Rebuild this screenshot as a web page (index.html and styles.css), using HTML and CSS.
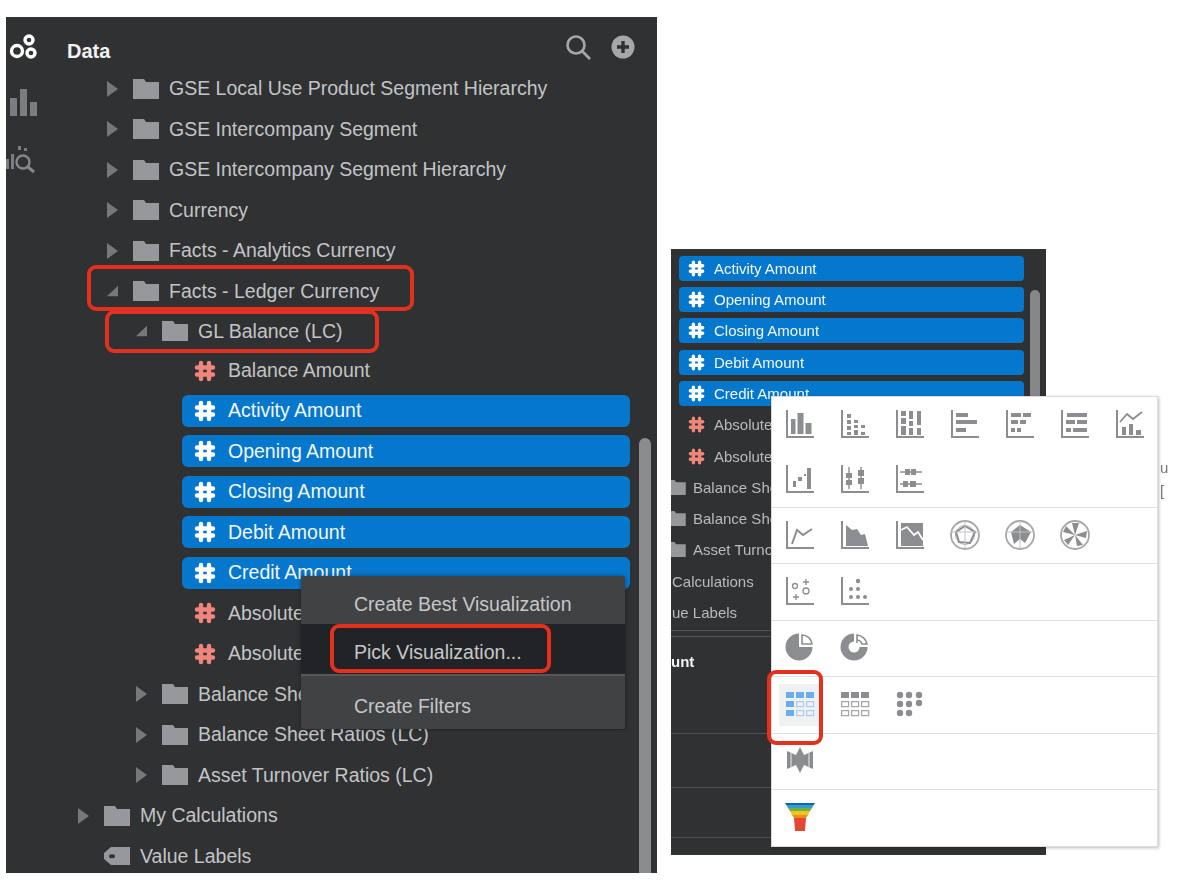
FILE: index.html
```html
<!DOCTYPE html>
<html lang="en">
<head>
    <meta charset="UTF-8">
    <title>Pick Visualization</title>
    <link rel="stylesheet" href="styles.css">
</head>
<body>

<!-- shared icons -->
<svg class="defs" aria-hidden="true">
    <symbol id="arrow" viewBox="0 0 12 16"><path d="M1 0L12 8L1 16Z"/></symbol>
    <symbol id="arrow-open" viewBox="0 0 14 14"><path d="M14 1V13H1Z"/></symbol>
    <symbol id="folder" viewBox="0 0 26 20"><path d="M0 0H11L13 3H26V20H0Z"/></symbol>
    <symbol id="tag" viewBox="0 0 26 20"><path fill-rule="evenodd" d="M7 1H26V19H7L0 13V7ZM8 8.5a2 2 0 1 0 0 3.5a2 2 0 1 0 0-3.5Z"/></symbol>
    <symbol id="hash" viewBox="0 0 22 22"><path d="M7 3V19M15 3V19M3 7.5H19M3 14.5H19" fill="none" stroke="currentColor" stroke-width="4.4" stroke-linecap="round"/></symbol>
    <symbol id="axis" viewBox="0 0 30 30"><path d="M2 1V28H29" fill="none" stroke="#8b8d90" stroke-width="2"/></symbol>
</svg>

<main class="page">

    <section class="panel">
        <div class="rail">
            <svg class="rail-icon" viewBox="0 0 30 30" fill="none" stroke="#fff" stroke-width="3.4"><circle cx="8" cy="19" r="5.5"/><circle cx="20" cy="8" r="4"/><circle cx="22" cy="21" r="4"/></svg>
            <svg class="rail-icon dim" viewBox="0 0 30 30" fill="#7b7d80"><rect x="1" y="10" width="7" height="18"/><rect x="11" y="1" width="7" height="27"/><rect x="21" y="14" width="7" height="14"/></svg>
            <svg class="rail-icon dim" viewBox="0 0 34 30" fill="#7b7d80"><rect x="0" y="15" width="3" height="10"/><rect x="5" y="10" width="3" height="15"/><circle cx="17" cy="18" r="6.5" fill="none" stroke="#85878a" stroke-width="2.4"/><rect x="12" y="2" width="3" height="4"/><rect x="18" y="4" width="3" height="3"/><path d="M22 23L28 28" stroke="#85878a" stroke-width="3"/></svg>
        </div>
        <div class="tree">
            <header class="tree-head">
                <h2>Data</h2>
                <svg class="head-icon" viewBox="0 0 26 26" fill="none" stroke="#a5a7a9" stroke-width="2.6"><circle cx="11" cy="11" r="8.5"/><path d="M17 17L25 25"/></svg>
                <svg class="head-icon plus" viewBox="0 0 24 24"><circle cx="12" cy="12" r="11.5" fill="#a5a7a9"/><path d="M12 6V18M6 12H18" stroke="#2f3133" stroke-width="3.4"/></svg>
            </header>
            <div class="row lvl1"><svg class="arrow"><use href="#arrow"/></svg><svg class="folder"><use href="#folder"/></svg><span>GSE Local Use Product Segment Hierarchy</span></div>
            <div class="row lvl1"><svg class="arrow"><use href="#arrow"/></svg><svg class="folder"><use href="#folder"/></svg><span>GSE Intercompany Segment</span></div>
            <div class="row lvl1"><svg class="arrow"><use href="#arrow"/></svg><svg class="folder"><use href="#folder"/></svg><span>GSE Intercompany Segment Hierarchy</span></div>
            <div class="row lvl1"><svg class="arrow"><use href="#arrow"/></svg><svg class="folder"><use href="#folder"/></svg><span>Currency</span></div>
            <div class="row lvl1"><svg class="arrow"><use href="#arrow"/></svg><svg class="folder"><use href="#folder"/></svg><span>Facts - Analytics Currency</span></div>
            <div class="row lvl1"><svg class="arrow"><use href="#arrow-open"/></svg><svg class="folder"><use href="#folder"/></svg><span>Facts - Ledger Currency</span></div>
            <div class="row lvl2 short"><svg class="arrow"><use href="#arrow-open"/></svg><svg class="folder"><use href="#folder"/></svg><span>GL Balance (LC)</span></div>
            <div class="row short"><div class="leaf"><svg class="hash"><use href="#hash"/></svg><span>Balance Amount</span></div></div>
            <div class="row"><div class="leaf selected"><svg class="hash"><use href="#hash"/></svg><span>Activity Amount</span></div></div>
            <div class="row"><div class="leaf selected"><svg class="hash"><use href="#hash"/></svg><span>Opening Amount</span></div></div>
            <div class="row"><div class="leaf selected"><svg class="hash"><use href="#hash"/></svg><span>Closing Amount</span></div></div>
            <div class="row"><div class="leaf selected"><svg class="hash"><use href="#hash"/></svg><span>Debit Amount</span></div></div>
            <div class="row"><div class="leaf selected"><svg class="hash"><use href="#hash"/></svg><span>Credit Amount</span></div></div>
            <div class="row"><div class="leaf"><svg class="hash"><use href="#hash"/></svg><span>Absolute</span></div></div>
            <div class="row"><div class="leaf"><svg class="hash"><use href="#hash"/></svg><span>Absolute</span></div></div>
            <div class="row lvl2"><svg class="arrow"><use href="#arrow"/></svg><svg class="folder"><use href="#folder"/></svg><span>Balance Sheet (LC)</span></div>
            <div class="row lvl2"><svg class="arrow"><use href="#arrow"/></svg><svg class="folder"><use href="#folder"/></svg><span>Balance Sheet Ratios (LC)</span></div>
            <div class="row lvl2"><svg class="arrow"><use href="#arrow"/></svg><svg class="folder"><use href="#folder"/></svg><span>Asset Turnover Ratios (LC)</span></div>
            <div class="row lvl0"><svg class="arrow"><use href="#arrow"/></svg><svg class="folder"><use href="#folder"/></svg><span>My Calculations</span></div>
            <div class="row lvl0"><svg class="arrow"></svg><svg class="folder"><use href="#tag"/></svg><span>Value Labels</span></div>
        </div>
        <div class="scrollbar"></div>

        <div class="context-menu">
            <div class="menu-item">Create Best Visualization</div>
            <div class="menu-item active">Pick Visualization...</div>
            <div class="menu-item">Create Filters</div>
        </div>
    </section>

    <section class="panel-small">
        <div class="small-list">
            <div class="small-row"><div class="chip selected"><svg class="hash"><use href="#hash"/></svg><span>Activity Amount</span></div></div>
            <div class="small-row"><div class="chip selected"><svg class="hash"><use href="#hash"/></svg><span>Opening Amount</span></div></div>
            <div class="small-row"><div class="chip selected"><svg class="hash"><use href="#hash"/></svg><span>Closing Amount</span></div></div>
            <div class="small-row"><div class="chip selected"><svg class="hash"><use href="#hash"/></svg><span>Debit Amount</span></div></div>
            <div class="small-row"><div class="chip selected"><svg class="hash"><use href="#hash"/></svg><span>Credit Amount</span></div></div>
            <div class="small-row"><div class="chip"><svg class="hash"><use href="#hash"/></svg><span>Absolute Amount</span></div></div>
            <div class="small-row"><div class="chip"><svg class="hash"><use href="#hash"/></svg><span>Absolute Amount</span></div></div>
            <div class="small-row"><svg class="folder"><use href="#folder"/></svg><span>Balance Sheet</span></div>
            <div class="small-row"><svg class="folder"><use href="#folder"/></svg><span>Balance Sheet</span></div>
            <div class="small-row"><svg class="folder"><use href="#folder"/></svg><span>Asset Turnover</span></div>
            <div class="small-row plain"><span>Calculations</span></div>
            <div class="small-row plain"><span>ue Labels</span></div>
        </div>
        <div class="pane-gap"></div>
        <div class="pane-a"><b>unt</b></div>
        <div class="pane-b"></div>
        <div class="pane-c"></div>
        <div class="small-scroll"></div>

        <div class="picker">
            <div class="picker-group">
                <svg class="chart" viewBox="0 0 30 30"><use href="#axis"/><path d="M6 10h4.5v15H6zM12.5 4h6v21h-6zM20.5 14h6v11h-6z"/></svg>
                <svg class="chart" viewBox="0 0 30 30"><use href="#axis"/><path d="M7 5h4v4H7zM7 11h4v4H7zM7 17h4v4H7zM7 23h4v3H7zM14 11h4v3h-4zM14 16h4v3h-4zM14 21h4v5h-4zM21 16h4v3h-4zM21 23h4v3h-4z"/></svg>
                <svg class="chart" viewBox="0 0 30 30"><use href="#axis"/><path d="M6 2h5v5H6zM6 9h5v6H6zM6 17h5v9H6zM14 2h4v8h-4zM14 12h4v5h-4zM14 19h4v7h-4zM22 2h4v14h-4zM22 19h4v7h-4z"/></svg>
                <svg class="chart" viewBox="0 0 30 30"><use href="#axis"/><path d="M6 4h12v4H6zM6 11h21v4H6zM6 19h10v4H6z"/></svg>
                <svg class="chart" viewBox="0 0 30 30"><use href="#axis"/><path d="M6 4h10v4H6zM18 4h8v4h-8zM6 11h7v4H6zM15 11h6v4h-6zM6 19h4v4H6zM12 19h4v4h-4z"/></svg>
                <svg class="chart" viewBox="0 0 30 30"><use href="#axis"/><path d="M7 4h20v4H7zM6 11h9v4H6zM17 11h10v4H17zM6 19h5v4H6zM13 19h14v4H13z"/></svg>
                <svg class="chart" viewBox="0 0 30 30"><use href="#axis"/><path d="M7 18h4v8H7zM14 15h4v11h-4zM21 21h5v5h-5z"/><path d="M5 13L12 5L18 10L27 3" fill="none" stroke="#8b8d90" stroke-width="1.8"/></svg>

                <svg class="chart" viewBox="0 0 30 30"><use href="#axis"/><path d="M8 17h3v6H8zM13 13h4v4h-4zM19 10h2v2h-2zM22 4h4v21h-4z"/></svg>
                <svg class="chart" viewBox="0 0 30 30"><use href="#axis"/><path d="M9 3v22M21 3v22" stroke="#8b8d90" stroke-width="1.4"/><path d="M6 9h6v5H6zM6 16h6v5H6zM18 6h6v6h-6zM18 14h6v6h-6z"/></svg>
                <svg class="chart" viewBox="0 0 30 30"><use href="#axis"/><path d="M5 8H27M5 20H27" stroke="#8b8d90" stroke-width="1.4"/><path d="M10 5h5v6h-5zM16 5h5v6h-5zM8 17h5v6H8zM15 17h6v6h-6z"/></svg>
            </div>
            <div class="picker-group">
                <svg class="chart" viewBox="0 0 30 30"><use href="#axis"/><path d="M7 24L12 10L18 15L27 9" fill="none" stroke="#8b8d90" stroke-width="2"/></svg>
                <svg class="chart" viewBox="0 0 30 30"><use href="#axis"/><path d="M6 26V5L12 10L17 9L21 15L25 14L28 26Z"/></svg>
                <svg class="chart" viewBox="0 0 30 30"><use href="#axis"/><path d="M6 3H28V26H6Z"/><path d="M6 10L12 7L19 15L23 12L28 20" fill="none" stroke="#fff" stroke-width="1.8"/></svg>
                <svg class="chart radar" viewBox="0 0 30 30"><circle cx="15" cy="15" r="14" fill="none" stroke="#a5a7a9" stroke-width="1.8"/><circle cx="15" cy="15" r="9.5" fill="none" stroke="#b5b7b9" stroke-width="1"/><path d="M15 6L25 12L20 23L9 22L6 12Z" fill="none" stroke="#8b8d90" stroke-width="2"/><path d="M15 1V29M1 12L29 12" stroke="#c0c2c4" stroke-width="1"/></svg>
                <svg class="chart radar" viewBox="0 0 30 30"><circle cx="15" cy="15" r="14" fill="none" stroke="#a5a7a9" stroke-width="1.8"/><path d="M15 5L26 12L20 23L15 19L9 24L6 12Z"/><path d="M15 1V29M1 12L29 12" stroke="#c0c2c4" stroke-width="1"/></svg>
                <svg class="chart radar" viewBox="0 0 30 30"><circle cx="15" cy="15" r="14" fill="none" stroke="#a5a7a9" stroke-width="1.8"/><path d="M15 15L12 3H19ZM15 15L27 11L26 18ZM15 15L23 25L17 26ZM15 15L8 25L4 20ZM15 15L3 12L6 6Z"/></svg>
            </div>
            <div class="picker-group">
                <svg class="chart" viewBox="0 0 30 30"><use href="#axis"/><g fill="none" stroke="#8b8d90" stroke-width="1.3"><circle cx="10" cy="10" r="2.5"/><circle cx="21" cy="15" r="3"/><path d="M18 6h6M21 3v6M8 21h6M11 18v6"/></g></svg>
                <svg class="chart" viewBox="0 0 30 30"><use href="#axis"/><circle cx="18" cy="5" r="2.2"/><circle cx="11" cy="13" r="2"/><circle cx="18" cy="13" r="2"/><circle cx="11" cy="21" r="2"/><circle cx="18" cy="21" r="2"/><circle cx="25" cy="21" r="2"/></svg>
            </div>
            <div class="picker-group">
                <svg class="chart" viewBox="0 0 30 30"><circle cx="14" cy="15" r="13.5"/><path d="M14 15V1H29V15Z" fill="#fff"/><path d="M17 12V3A10 10 0 0 1 27 12Z" fill="#fff" stroke="#8b8d90" stroke-width="1.6"/></svg>
                <svg class="chart" viewBox="0 0 30 30"><circle cx="14" cy="15" r="13.5"/><path d="M14 15V1H29V15Z" fill="#fff"/><circle cx="14" cy="15" r="5.5" fill="#fff"/><path d="M17 11V3A11 11 0 0 1 27 12H22A6 6 0 0 0 17 8Z" fill="#fff" stroke="#8b8d90" stroke-width="1.6"/></svg>
            </div>
            <div class="picker-group">
                <div class="chart-slot picked">
                    <svg class="chart" viewBox="0 0 30 30"><g fill="#6badea"><rect x="1" y="3" width="8" height="6"/><rect x="11" y="3" width="8" height="6"/><rect x="21" y="3" width="8" height="6"/><rect x="1" y="12" width="8" height="6"/><rect x="1" y="21" width="8" height="6"/></g><g fill="none" stroke="#a9cdf0" stroke-width="1.2"><rect x="11.6" y="12.6" width="7" height="5"/><rect x="21.6" y="12.6" width="7" height="5"/><rect x="11.6" y="21.6" width="7" height="5"/><rect x="21.6" y="21.6" width="7" height="5"/></g></svg>
                </div>
                <svg class="chart" viewBox="0 0 30 30"><rect x="1" y="3" width="8" height="6"/><rect x="11" y="3" width="8" height="6"/><rect x="21" y="3" width="8" height="6"/><g fill="none" stroke="#a5a7a9" stroke-width="1.3"><rect x="1.6" y="12.6" width="7" height="5"/><rect x="11.6" y="12.6" width="7" height="5"/><rect x="21.6" y="12.6" width="7" height="5"/><rect x="1.6" y="21.6" width="7" height="5"/><rect x="11.6" y="21.6" width="7" height="5"/><rect x="21.6" y="21.6" width="7" height="5"/></g></svg>
                <svg class="chart" viewBox="0 0 30 30"><circle cx="5" cy="6" r="3.2"/><circle cx="14" cy="6" r="3.2"/><circle cx="24" cy="6" r="3.2"/><circle cx="5" cy="15" r="3.2"/><circle cx="14" cy="15" r="3.2"/><circle cx="24" cy="14" r="3.2"/><circle cx="5" cy="24" r="3.2"/><circle cx="14" cy="24" r="3.2"/></svg>
            </div>
            <div class="picker-group">
                <svg class="chart" viewBox="0 0 30 30"><path d="M2 6L11 10L15 2L19 10L28 6V24L19 20L15 28L11 20L2 24Z"/><path d="M6 8V22M24 8V22" stroke="#fff" stroke-width=".8"/></svg>
            </div>
            <div class="picker-group">
                <svg class="chart" viewBox="0 0 30 30"><path d="M0 1H30L28.8 3H1.2Z" fill="#1f5fa8"/><path d="M1.2 3H28.8L27 6H3Z" fill="#2f9fd8"/><path d="M3 6H27L25 9H5Z" fill="#6cb33f"/><path d="M5 9H25L23 13H7Z" fill="#f3c221"/><path d="M7 13H23L21 16H9Z" fill="#f08a24"/><path d="M9 16H21L20 29H10Z" fill="#e2492f"/></svg>
            </div>
        </div>
    </section>

    <span class="stray stray-u">u</span>
    <span class="stray stray-d">[</span>

    <!-- red call-outs drawn on top of the screenshot -->
    <div class="ring ring-facts"></div>
    <div class="ring ring-balance"></div>
    <div class="ring ring-pick"></div>
    <div class="ring ring-table"></div>
</main>

</body>
</html>
```

FILE: styles.css
```css
html, body {
    margin: 0;
    height: 100%;
    overflow: hidden;
    background-color: #fff;
}

.defs {
    position: absolute;
    width: 0;
    height: 0;
}

.page {
    position: relative;
    display: flex;
    align-items: flex-start;
    height: 886px;
    padding: 17px 0 0 6px;
    box-sizing: border-box;
    font-family: "Liberation Sans", Arial, sans-serif;
    filter: blur(0.6px);
}

/* left panel */
.panel {
    position: relative;
    display: flex;
    width: 651px;
    height: 856px;
    background-color: #2f3133;
    color: #c3c4c6;
    font-size: 19.5px;
    flex-shrink: 0;
}

.rail {
    width: 61px;
    flex-shrink: 0;
    display: flex;
    flex-direction: column;
    overflow: hidden;
}

.rail-icon {
    display: block;
    width: 30px;
    height: 30px;
    margin: 15px 0 0 3px;
}

.rail-icon.dim {
    margin-top: 26px;
}

.rail-icon.dim:last-child {
    width: 34px;
    margin-left: 0;
}

.tree {
    flex: 1;
    min-width: 0;
    overflow: hidden;
}

.tree-head {
    display: flex;
    align-items: center;
    height: 51.5px;
    padding-right: 22px;
    box-sizing: border-box;
}

.tree-head h2 {
    flex: 1;
    margin: 17px 0 0;
    font-size: 20px;
    color: #f2f2f2;
}

.head-icon {
    width: 26px;
    height: 26px;
    margin: 9px 0 0;
}

.head-icon.plus {
    width: 24px;
    height: 24px;
    margin-left: 20px;
}

.row {
    display: flex;
    align-items: center;
    height: 40.5px;
    white-space: nowrap;
}

.row.short {
    height: 39.5px;
}

.lvl0 { padding-left: 10px; }
.lvl1 { padding-left: 39px; }
.lvl2 { padding-left: 68px; }

.arrow {
    width: 12px;
    height: 16px;
    margin-right: 15px;
    fill: #76787b;
    flex-shrink: 0;
}

.folder {
    width: 26px;
    height: 20px;
    margin-right: 10px;
    fill: #96989b;
    flex-shrink: 0;
}

.leaf {
    display: flex;
    align-items: center;
    height: 32px;
    width: 448px;
    margin-left: 115px;
    padding-left: 12px;
    box-sizing: border-box;
    border-radius: 6px;
}

.hash {
    width: 22px;
    height: 22px;
    margin-right: 12px;
    color: #f0867b;
    flex-shrink: 0;
}

.selected {
    background-color: #0577cc;
    color: #f3f6fa;
}

.selected .hash {
    color: #fff;
}

.scrollbar {
    position: absolute;
    left: 633px;
    top: 421px;
    bottom: 0;
    width: 12px;
    border-radius: 6px 6px 0 0;
    background-color: #8a8c8e;
}

/* right click menu */
.context-menu {
    position: absolute;
    left: 295px;
    top: 559px;
    width: 324px;
    height: 153px;
    background-color: #404244;
    border-radius: 3px;
    box-shadow: 0 0 4px rgba(0, 0, 0, 0.4);
    color: #c6c7c8;
    font-size: 19.5px;
    box-sizing: border-box;
    padding-top: 8px;
}

.menu-item {
    display: flex;
    align-items: center;
    height: 40px;
    padding-left: 53px;
}

.menu-item.active {
    height: 44px;
    padding-top: 6px;
    background-color: #212326;
    border-bottom: 2px solid #55575a;
    margin-bottom: 10px;
}

/* right panel */
.panel-small {
    position: relative;
    width: 375px;
    height: 606px;
    margin: 232px 0 0 14px;
    background-color: #2f3133;
    color: #b9babc;
    font-size: 15px;
    flex-shrink: 0;
}

.small-list {
    padding-top: 3.6px;
    overflow: hidden;
}

.small-row {
    display: flex;
    align-items: center;
    height: 31.3px;
    white-space: nowrap;
}

.small-row .folder {
    width: 20px;
    height: 15px;
    margin: 0 7px 0 -5px;
}

.small-row.plain {
    padding-left: 1px;
}

.chip {
    display: flex;
    align-items: center;
    width: 345px;
    height: 25px;
    margin-left: 8px;
    padding-left: 9px;
    box-sizing: border-box;
    border-radius: 4px;
}

.chip .hash {
    width: 17px;
    height: 17px;
    margin-right: 9px;
}

.pane-gap {
    height: 7px;
    margin-top: 2px;
    border-top: 1px solid #55575a;
    border-bottom: 1px solid #55575a;
    box-sizing: border-box;
}

.pane-a {
    height: 97px;
    padding-top: 16px;
    box-sizing: border-box;
    border-bottom: 1px solid #4d4f52;
    color: #f2f2f2;
    font-size: 15px;
}

.pane-b {
    height: 54px;
    border-bottom: 1px solid #4d4f52;
    box-sizing: border-box;
}

.pane-c {
    height: 50px;
    border-bottom: 1px solid #4d4f52;
    box-sizing: border-box;
}

.small-scroll {
    position: absolute;
    left: 359px;
    top: 41px;
    width: 10px;
    height: 130px;
    border-radius: 5px;
    background-color: #85878a;
}

/* chart type picker */
.picker {
    position: absolute;
    left: 100px;
    top: 147px;
    width: 387px;
    height: 451px;
    box-sizing: border-box;
    background-color: #fff;
    border: 1px solid #dcdcdc;
    box-shadow: 1px 1px 3px rgba(0, 0, 0, 0.25);
    overflow: hidden;
}

.picker-group {
    display: grid;
    grid-template-columns: repeat(7, 55px);
    grid-auto-rows: 55.4px;
    justify-items: center;
    align-items: center;
    border-bottom: 1px solid #dfe0e1;
}

.picker-group:last-child {
    border-bottom: none;
}

.picker-group:first-child {
    grid-auto-rows: 55px;
}

.chart {
    display: block;
    width: 30px;
    height: 30px;
    margin-bottom: 2px;
    fill: #8b8d90;
}

.chart-slot.picked {
    display: flex;
    align-items: center;
    justify-content: center;
    width: 41px;
    height: 42px;
    background-color: #f0f1f3;
}

.stray {
    position: absolute;
    left: 1160px;
    color: #777;
    font-size: 15px;
}

.stray-u { top: 459px; }
.stray-d { top: 482px; }

/* call-outs */
.ring {
    position: absolute;
    box-sizing: border-box;
    border: 4px solid #e2311f;
    border-radius: 9px;
}

.ring-facts { left: 87px; top: 265px; width: 327px; height: 46px; }
.ring-balance { left: 105px; top: 310px; width: 274px; height: 43px; }
.ring-pick { left: 330px; top: 624px; width: 221px; height: 49px; }
.ring-table { left: 767px; top: 670px; width: 56px; height: 75px; }
```
